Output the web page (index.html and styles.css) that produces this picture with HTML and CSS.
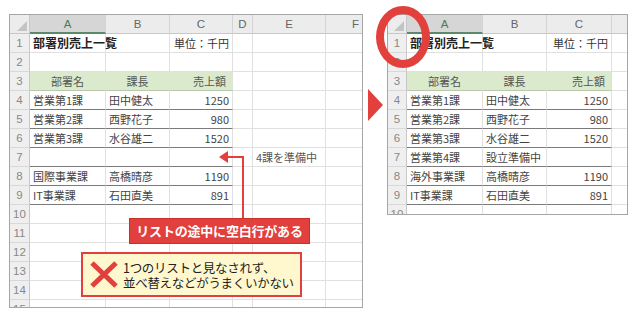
FILE: index.html
```html
<!DOCTYPE html>
<html lang="ja">
<head>
<meta charset="utf-8">
<link rel="stylesheet" href="styles.css">
</head>
<body>
<div class="page">
  <div class="sheet sheet-left">
    <div class="grid grid-left">
      <div class="corner"><span class="tri"></span></div>
      <div class="ch sel">A</div><div class="ch">B</div><div class="ch">C</div><div class="ch">D</div><div class="ch">E</div><div class="ch">F</div>

      <div class="rh">1</div><div class="c title">部署別売上一覧</div><div class="c"></div><div class="c r">単位：千円</div><div class="c"></div><div class="c"></div><div class="c"></div>
      <div class="rh">2</div><div class="c"></div><div class="c"></div><div class="c"></div><div class="c"></div><div class="c"></div><div class="c"></div>
      <div class="rh">3</div><div class="c hd">部署名</div><div class="c hd">課長</div><div class="c hd hr">売上額</div><div class="c"></div><div class="c"></div><div class="c"></div>
      <div class="rh">4</div><div class="c t">営業第1課</div><div class="c t">田中健太</div><div class="c t r">1250</div><div class="c"></div><div class="c"></div><div class="c"></div>
      <div class="rh">5</div><div class="c t">営業第2課</div><div class="c t">西野花子</div><div class="c t r">980</div><div class="c"></div><div class="c"></div><div class="c"></div>
      <div class="rh">6</div><div class="c t">営業第3課</div><div class="c t">水谷雄二</div><div class="c t r">1520</div><div class="c"></div><div class="c"></div><div class="c"></div>
      <div class="rh">7</div><div class="c t"></div><div class="c t"></div><div class="c t r"></div><div class="c"></div><div class="c note">4課を準備中</div><div class="c"></div>
      <div class="rh">8</div><div class="c t">国際事業課</div><div class="c t">高橋晴彦</div><div class="c t r">1190</div><div class="c"></div><div class="c"></div><div class="c"></div>
      <div class="rh">9</div><div class="c t">IT事業課</div><div class="c t">石田直美</div><div class="c t r">891</div><div class="c"></div><div class="c"></div><div class="c"></div>
      <div class="rh">10</div><div class="c"></div><div class="c"></div><div class="c"></div><div class="c"></div><div class="c"></div><div class="c"></div>
      <div class="rh">11</div><div class="c"></div><div class="c"></div><div class="c"></div><div class="c"></div><div class="c"></div><div class="c"></div>
      <div class="rh">12</div><div class="c"></div><div class="c"></div><div class="c"></div><div class="c"></div><div class="c"></div><div class="c"></div>
      <div class="rh">13</div><div class="c"></div><div class="c"></div><div class="c"></div><div class="c"></div><div class="c"></div><div class="c"></div>
      <div class="rh">14</div><div class="c"></div><div class="c"></div><div class="c"></div><div class="c"></div><div class="c"></div><div class="c"></div>
      <div class="rh">15</div><div class="c"></div><div class="c"></div><div class="c"></div><div class="c"></div><div class="c"></div><div class="c"></div>
    </div>
  </div>

  <div class="sheet sheet-right">
    <div class="grid grid-right">
      <div class="corner"><span class="tri"></span></div>
      <div class="ch sel">A</div><div class="ch">B</div><div class="ch">C</div><div class="ch"></div>

      <div class="rh">1</div><div class="c title">部署別売上一覧</div><div class="c"></div><div class="c r">単位：千円</div><div class="c"></div>
      <div class="rh">2</div><div class="c"></div><div class="c"></div><div class="c"></div><div class="c"></div>
      <div class="rh">3</div><div class="c hd">部署名</div><div class="c hd">課長</div><div class="c hd hr">売上額</div><div class="c"></div>
      <div class="rh">4</div><div class="c t">営業第1課</div><div class="c t">田中健太</div><div class="c t r">1250</div><div class="c"></div>
      <div class="rh">5</div><div class="c t">営業第2課</div><div class="c t">西野花子</div><div class="c t r">980</div><div class="c"></div>
      <div class="rh">6</div><div class="c t">営業第3課</div><div class="c t">水谷雄二</div><div class="c t r">1520</div><div class="c"></div>
      <div class="rh">7</div><div class="c t">営業第4課</div><div class="c t">設立準備中</div><div class="c t r"></div><div class="c"></div>
      <div class="rh">8</div><div class="c t">海外事業課</div><div class="c t">高橋晴彦</div><div class="c t r">1190</div><div class="c"></div>
      <div class="rh">9</div><div class="c t">IT事業課</div><div class="c t">石田直美</div><div class="c t r">891</div><div class="c"></div>
      <div class="rh">10</div><div class="c"></div><div class="c"></div><div class="c"></div><div class="c"></div>
    </div>
  </div>

  <div class="arrow-line"></div>
  <div class="arrow-head"></div>
  <div class="label-red">リストの途中に空白行がある</div>
  <div class="callout">
    <svg class="xmark" width="30" height="27" viewBox="0 0 30 27"><path d="M3 2 L27 25 M27 2 L3 25" stroke="#e2403c" stroke-width="5" stroke-linecap="butt" fill="none"/></svg>
    <div class="callout-text"><div>1つのリストと見なされず、</div><div>並べ替えなどがうまくいかない</div></div>
  </div>
  <div class="next-tri"></div>
  <div class="circle"></div>
</div>
</body>
</html>
```

FILE: styles.css
```css
* { box-sizing: border-box; }
html, body { margin: 0; padding: 0; background: #fff; }
body { width: 638px; height: 319px; overflow: hidden; font-family: "Noto Sans CJK JP", "Noto Sans", sans-serif; }

.page { position: relative; width: 638px; height: 319px; display: flex; align-items: flex-start; }

.sheet { border: 1px solid #a6a6a6; overflow: hidden; margin-top: 14px; background: #fff; }
.sheet-left { margin-left: 9px; width: 354px; height: 294px; }
.sheet-right { margin-left: 24px; width: 241px; height: 201px; }

.grid { display: grid; grid-auto-rows: 19px; }
.grid-left { grid-template-columns: 20px 76px 64px 63px 20px 73px 60px; }
.grid-right { grid-template-columns: 19px 76px 64px 65px 30px; }

.grid > div { border-right: 1px solid #e0e0e0; border-bottom: 1px solid #e0e0e0; white-space: nowrap; overflow: visible; font-size: 11px; line-height: 18px; color: #333; }

.corner { background: #ececec; position: relative; border-bottom: 1px solid #c8c8c8 !important; border-right: 1px solid #c8c8c8 !important; }
.corner .tri { position: absolute; right: 2px; bottom: 2px; width: 0; height: 0; border-left: 10px solid transparent; border-bottom: 10px solid #c4c4c4; }

.grid > .ch { background: #ececec; text-align: center; color: #666; font-family: "Liberation Sans", "Noto Sans", sans-serif; font-size: 11.5px; border-bottom: 1px solid #c8c8c8; border-right: 1px solid #d4d4d4; }
.grid > .ch.sel { background: #d6d6d6; border-bottom: 2px solid #5b8a6b; color: #4b7a5b; }

.grid > .rh { background: #efefef; text-align: center; color: #888; font-family: "Liberation Sans", "Noto Sans", sans-serif; font-size: 11.5px; border-right: 1px solid #c8c8c8; border-bottom: 1px solid #d8d8d8; overflow: hidden; }

.c { padding: 0 3px; }
.grid > .title { font-weight: bold; font-size: 12px; color: #222; }
.grid > .r { text-align: right; }
.grid > .hd { background: #dbeacd; text-align: center; color: #555; border-right-color: #dbeacd; border-bottom: 1px solid #b9c9ae; }
.grid > .hd.hr { text-align: right; padding-right: 6px; border-right-color: #e0e0e0; }
.grid > .t { border-bottom: 1px solid #7a7a7a; color: #444; }
.grid > .note { color: #555; }

.arrow-line { position: absolute; left: 227px; top: 156px; width: 17px; height: 64px; border-top: 2px solid #e2403c; border-right: 2px solid #e2403c; }
.arrow-head { position: absolute; left: 219px; top: 151px; width: 0; height: 0; border-top: 6px solid transparent; border-bottom: 6px solid transparent; border-right: 9px solid #e2403c; }

.label-red { position: absolute; left: 130px; top: 219px; width: 179px; height: 24px; background: #e2403c; color: #fff; font-weight: bold; font-size: 13px; line-height: 24px; text-align: center; letter-spacing: -0.2px; box-shadow: 0 0 0 1px #c9302c; }

.callout { position: absolute; left: 81px; top: 252px; width: 221px; height: 45px; background: #fff8cf; border: 2px solid #e2403c; display: flex; align-items: center; padding-left: 6px; gap: 4px; }
.xmark { flex: none; }
.callout-text { font-size: 12.5px; line-height: 15px; color: #222; letter-spacing: -0.3px; }

.next-tri { position: absolute; left: 368px; top: 89px; width: 0; height: 0; border-top: 16px solid transparent; border-bottom: 16px solid transparent; border-left: 15px solid #e2403c; }

.circle { position: absolute; left: 376px; top: 6px; width: 54px; height: 62px; border: 8px solid #e2403c; border-radius: 50%; }
```
